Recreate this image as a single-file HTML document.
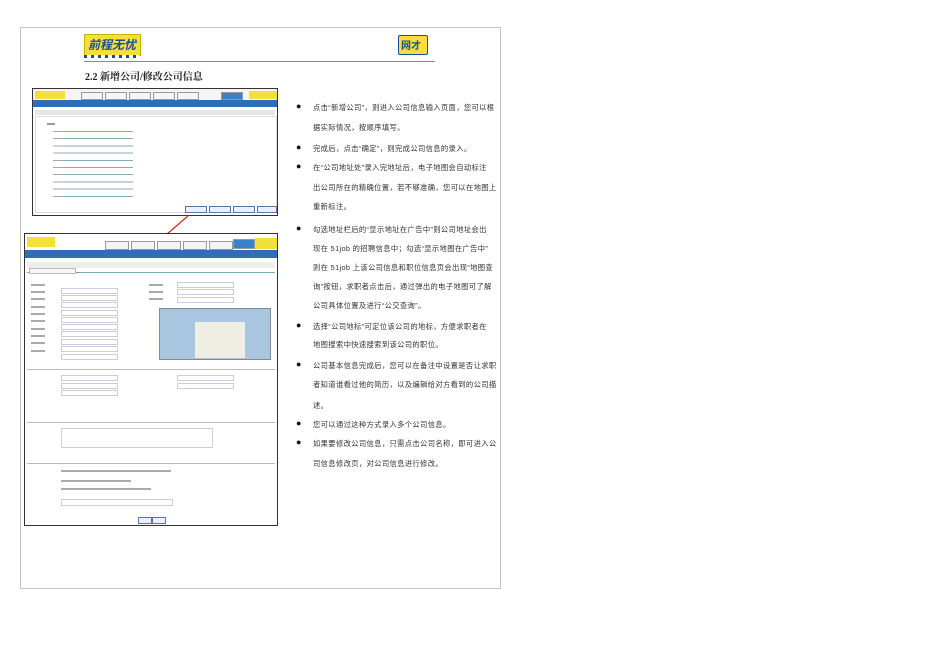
<!DOCTYPE html>
<html><head><meta charset="utf-8"><style>
body{margin:0;width:950px;height:672px;background:#fff;position:relative;overflow:hidden;font-family:"Liberation Sans","Noto Sans CJK SC",sans-serif}
.a{position:absolute}
.t{font-size:7.3px;color:#333;letter-spacing:.35px;white-space:nowrap}
.d{font-size:9px;color:#111;left:0}
.in{position:absolute;height:4px;border:1px solid #ccd;background:#fff}
.lb{position:absolute;height:2px;width:14px;background:#aaa}
.tab{position:absolute;top:3px;height:6px;border:1px solid #999;background:#f4f4f4}
</style></head><body>
<div class="a" style="left:20px;top:27px;width:479px;height:560px;border:1px solid #c4c4c4"></div>
<div class="a" style="left:84px;top:34px;width:55px;height:20px;background:#f3e03a;border:1px solid #c8b400"></div>
<div class="a" style="left:88px;top:36px;font:bold italic 12px 'Noto Sans CJK SC';color:#1d4c9a">前程无忧</div>
<div class="a" style="left:84px;top:55px;width:55px;height:3px;background:repeating-linear-gradient(90deg,#1d4c9a 0 3px,#fff 3px 7px)"></div>
<div class="a" style="left:398px;top:35px;width:28px;height:18px;background:#f3e03a;border:1px solid #1d4c9a;border-radius:2px"></div>
<div class="a" style="left:401px;top:37px;font:bold 10px 'Noto Sans CJK SC';color:#1d4c9a">网才</div>
<div class="a" style="left:84px;top:61px;width:351px;height:1px;background:#888"></div>
<div class="a" style="left:85px;top:68px;font:bold 10px 'Liberation Serif','Noto Serif CJK SC',serif;color:#222">2.2 新增公司/修改公司信息</div>

<div class="a" style="left:32px;top:88px;width:244px;height:126px;border:1px solid #333;background:#fff">
 <div class="a" style="left:0;top:0;width:244px;height:11px;background:#f4f4f4"></div>
 <div class="a" style="left:2px;top:2px;width:30px;height:8px;background:#f3e03a"></div>
 <div class="tab" style="left:48px;width:20px"></div><div class="tab" style="left:72px;width:20px"></div><div class="tab" style="left:96px;width:20px"></div><div class="tab" style="left:120px;width:20px"></div><div class="tab" style="left:144px;width:20px"></div>
 <div class="tab" style="left:188px;width:20px;background:#3a82c8"></div>
 <div class="a" style="left:216px;top:2px;width:28px;height:8px;background:#f3e03a"></div>
 <div class="a" style="left:0;top:11px;width:244px;height:7px;background:#2f6db5"></div>
 <div class="a" style="left:2px;top:21px;width:240px;height:5px;background:#e6e6e6"></div>
 <div class="a" style="left:2px;top:27px;width:240px;height:95px;border:1px solid #ddd"></div>
 <div class="a" style="left:14px;top:34px;width:8px;height:2px;background:#999"></div>
 <div class="a" style="left:20px;top:40px;width:10px;height:72px;background:repeating-linear-gradient(180deg,transparent 0 2px,#aaa 2px 3px,transparent 3px 7.2px)"></div>
 <div class="a" style="left:30px;top:40px;width:70px;height:72px;background:repeating-linear-gradient(180deg,transparent 0 2px,#8ab 2px 3px,transparent 3px 7.2px)"></div>
 <div class="a" style="left:152px;top:117px;width:20px;height:5px;border:1px solid #57a;background:#eef"></div>
 <div class="a" style="left:176px;top:117px;width:20px;height:5px;border:1px solid #57a;background:#eef"></div>
 <div class="a" style="left:200px;top:117px;width:20px;height:5px;border:1px solid #57a;background:#eef"></div>
 <div class="a" style="left:224px;top:117px;width:18px;height:5px;border:1px solid #57a;background:#eef"></div>
</div>
<svg class="a" style="left:150px;top:210px" width="50" height="40"><line x1="38" y1="6" x2="10" y2="30" stroke="#d22" stroke-width="1.2"/><path d="M10 30 L13 24 L16 28 Z" fill="#d22"/></svg>

<div class="a" style="left:24px;top:233px;width:252px;height:291px;border:1px solid #333;background:#fff">
 <div class="a" style="left:2px;top:3px;width:28px;height:10px;background:#f3e03a"></div>
 <div class="tab" style="left:80px;top:7px;width:22px;height:7px"></div><div class="tab" style="left:106px;top:7px;width:22px;height:7px"></div><div class="tab" style="left:132px;top:7px;width:22px;height:7px"></div><div class="tab" style="left:158px;top:7px;width:22px;height:7px"></div><div class="tab" style="left:184px;top:7px;width:22px;height:7px"></div>
 <div class="tab" style="left:208px;top:5px;width:20px;height:8px;background:#3a82c8"></div>
 <div class="a" style="left:230px;top:4px;width:22px;height:11px;background:#f3e03a"></div>
 <div class="a" style="left:0;top:16px;width:252px;height:8px;background:#2f6db5"></div>
 <div class="a" style="left:2px;top:28px;width:248px;height:6px;background:#eee"></div>
 <div class="a" style="left:2px;top:38px;width:248px;height:1px;background:#7aa"></div>
 <div class="a" style="left:4px;top:34px;width:45px;height:4px;border:1px solid #bbb;background:#f6f6f6"></div>
 <div class="lb" style="left:6px;top:50px"></div><div class="lb" style="left:6px;top:57px"></div><div class="lb" style="left:6px;top:64px"></div><div class="lb" style="left:6px;top:72px"></div><div class="lb" style="left:6px;top:79px"></div><div class="lb" style="left:6px;top:86px"></div><div class="lb" style="left:6px;top:94px"></div><div class="lb" style="left:6px;top:101px"></div><div class="lb" style="left:6px;top:108px"></div><div class="lb" style="left:6px;top:116px"></div>
 <div class="in" style="left:36px;top:54px;width:55px"></div><div class="in" style="left:36px;top:61px;width:55px"></div><div class="in" style="left:36px;top:68px;width:55px"></div><div class="in" style="left:36px;top:76px;width:55px"></div><div class="in" style="left:36px;top:83px;width:55px"></div><div class="in" style="left:36px;top:90px;width:55px"></div><div class="in" style="left:36px;top:97px;width:55px"></div><div class="in" style="left:36px;top:105px;width:55px"></div><div class="in" style="left:36px;top:112px;width:55px"></div><div class="in" style="left:36px;top:120px;width:55px"></div>
 <div class="lb" style="left:124px;top:50px"></div><div class="lb" style="left:124px;top:57px"></div><div class="lb" style="left:124px;top:64px"></div>
 <div class="in" style="left:152px;top:48px;width:55px"></div><div class="in" style="left:152px;top:55px;width:55px"></div><div class="in" style="left:152px;top:63px;width:55px"></div>
 <div class="a" style="left:134px;top:74px;width:110px;height:50px;background:#a9c6e0;border:1px solid #889"></div>
 <div class="a" style="left:170px;top:88px;width:50px;height:36px;background:#f0ede4"></div>
 <div class="a" style="left:2px;top:135px;width:248px;height:1px;background:#bbb"></div>
 <div class="in" style="left:36px;top:141px;width:55px"></div><div class="in" style="left:36px;top:149px;width:55px"></div><div class="in" style="left:36px;top:156px;width:55px"></div>
 <div class="in" style="left:152px;top:141px;width:55px"></div><div class="in" style="left:152px;top:149px;width:55px"></div>
 <div class="a" style="left:2px;top:188px;width:248px;height:1px;background:#bbb"></div>
 <div class="in" style="left:36px;top:194px;width:150px;height:18px"></div>
 <div class="a" style="left:2px;top:229px;width:248px;height:1px;background:#bbb"></div>
 <div class="a" style="left:36px;top:236px;width:110px;height:2px;background:#aaa"></div>
 <div class="a" style="left:36px;top:246px;width:70px;height:2px;background:#aaa"></div>
 <div class="a" style="left:36px;top:254px;width:90px;height:2px;background:#aaa"></div>
 <div class="in" style="left:36px;top:265px;width:110px;height:5px"></div>
 <div class="a" style="left:113px;top:283px;width:12px;height:5px;border:1px solid #57a;background:#eef"></div>
 <div class="a" style="left:127px;top:283px;width:12px;height:5px;border:1px solid #57a;background:#eef"></div>
</div>

<div class="a" style="left:296px;top:0">
 <div class="a t d" style="top:101px">●</div><div class="a t" style="left:17px;top:103px">点击“新增公司”，则进入公司信息输入页面，您可以根</div>
 <div class="a t" style="left:17px;top:123px">据实际情况，按顺序填写。</div>
 <div class="a t d" style="top:142px">●</div><div class="a t" style="left:17px;top:144px">完成后，点击“确定”，则完成公司信息的录入。</div>
 <div class="a t d" style="top:161px">●</div><div class="a t" style="left:17px;top:163px">在“公司地址处”录入完地址后，电子地图会自动标注</div>
 <div class="a t" style="left:17px;top:183px">出公司所在的精确位置，若不够准确，您可以在地图上</div>
 <div class="a t" style="left:17px;top:202px">重新标注。</div>
 <div class="a t d" style="top:223px">●</div><div class="a t" style="left:17px;top:225px">勾选地址栏后的“显示地址在广告中”则公司地址会出</div>
 <div class="a t" style="left:17px;top:244px">现在 51job 的招聘信息中；勾选“显示地图在广告中”</div>
 <div class="a t" style="left:17px;top:263px">则在 51job 上该公司信息和职位信息页会出现“地图查</div>
 <div class="a t" style="left:17px;top:282px">询”按钮，求职者点击后，通过弹出的电子地图可了解</div>
 <div class="a t" style="left:17px;top:301px">公司具体位置及进行“公交查询”。</div>
 <div class="a t d" style="top:320px">●</div><div class="a t" style="left:17px;top:322px">选择“公司地标”可定位该公司的地标，方便求职者在</div>
 <div class="a t" style="left:17px;top:340px">地图搜索中快速搜索到该公司的职位。</div>
 <div class="a t d" style="top:359px">●</div><div class="a t" style="left:17px;top:361px">公司基本信息完成后，您可以在备注中设置是否让求职</div>
 <div class="a t" style="left:17px;top:380px">者知道谁看过他的简历，以及编辑给对方看到的公司描</div>
 <div class="a t" style="left:17px;top:401px">述。</div>
 <div class="a t d" style="top:418px">●</div><div class="a t" style="left:17px;top:420px">您可以通过这种方式录入多个公司信息。</div>
 <div class="a t d" style="top:437px">●</div><div class="a t" style="left:17px;top:439px">如果要修改公司信息，只需点击公司名称，即可进入公</div>
 <div class="a t" style="left:17px;top:459px">司信息修改页，对公司信息进行修改。</div>
</div>
</body></html>
